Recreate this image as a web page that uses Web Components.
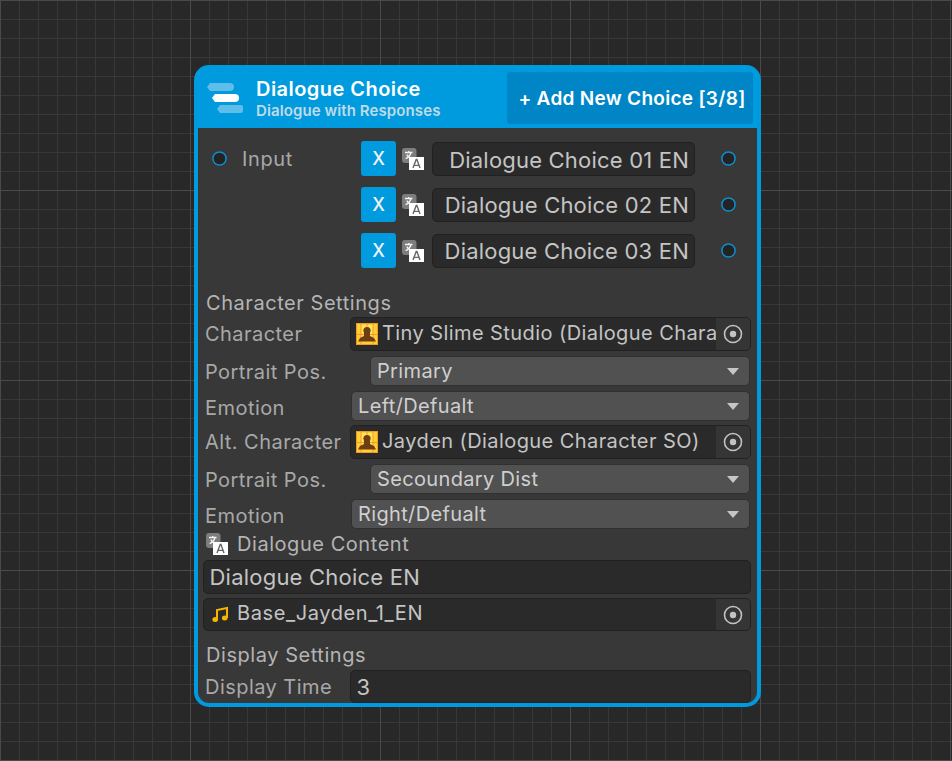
<!DOCTYPE html>
<html lang="en">
<head>
<meta charset="utf-8">
<title>Dialogue Choice</title>
<style>
  html, body { margin: 0; height: 100%; background: #282828; overflow: hidden; }
  body { font-family: Inter, "Noto Sans", sans-serif; color: #c4c4c4; }
</style>
</head>
<body>
<graph-canvas>
  <dialogue-node title="Dialogue Choice" subtitle="Dialogue with Responses" action="+ Add New Choice [3/8]">
    <div style="display:flex;height:138px">
      <input-port label="Input"></input-port>
      <div style="display:flex;flex-direction:column;gap:11px;margin-left:auto">
        <choice-row text="Dialogue Choice 01 EN"></choice-row>
        <choice-row text="Dialogue Choice 02 EN"></choice-row>
        <choice-row text="Dialogue Choice 03 EN"></choice-row>
      </div>
    </div>
    <section-title style="margin-top:12px">Character Settings</section-title>
    <prop-row label="Character" height="34" top="2" left="147"><object-field type="character" text="Tiny Slime Studio (Dialogue Chara"></object-field></prop-row>
    <prop-row label="Portrait Pos." height="30" top="5" left="167" drop="2"><enum-field text="Primary"></enum-field></prop-row>
    <prop-row label="Emotion" height="30" top="5" left="148" drop="4"><enum-field text="Left/Defualt"></enum-field></prop-row>
    <prop-row label="Alt. Character" height="34" top="4" left="147"><object-field type="character" text="Jayden (Dialogue Character SO)"></object-field></prop-row>
    <prop-row label="Portrait Pos." height="30" top="5" left="167" drop="2"><enum-field text="Secoundary Dist"></enum-field></prop-row>
    <prop-row label="Emotion" height="30" top="5" left="148" drop="4"><enum-field text="Right/Defualt"></enum-field></prop-row>
    <section-title translate="yes" style="margin-top:3px">Dialogue Content</section-title>
    <text-field style="margin-top:4px;height:34px" text="Dialogue Choice EN"></text-field>
    <object-field type="audio" text="Base_Jayden_1_EN" style="margin-top:4px;height:33px"></object-field>
    <section-title style="margin-top:12px">Display Settings</section-title>
    <prop-row label="Display Time" height="33" top="3" left="147"><text-field text="3"></text-field></prop-row>
  </dialogue-node>
</graph-canvas>

<script>
// small helper so each component only declares its markup once
function shadow(el, html) {
  if (!el.shadowRoot) el.attachShadow({ mode: "open" });
  el.shadowRoot.innerHTML = html;
}

class GraphCanvas extends HTMLElement {
  connectedCallback() {
    shadow(this, `
      <style>
        :host {
          display: block;
          position: relative;
          width: 952px;
          height: 761px;
          background-color: #282828;
          background-image:
            linear-gradient(#4a4a4a 0 1px, transparent 1px),
            linear-gradient(90deg, #4a4a4a 0 1px, transparent 1px),
            linear-gradient(#383838 0 1px, transparent 1px),
            linear-gradient(90deg, #383838 0 1px, transparent 1px);
          background-size: 190px 190px, 190px 190px, 19px 19px, 19px 19px;
        }
      </style>
      <slot></slot>`);
  }
}

class DialogueNode extends HTMLElement {
  connectedCallback() {
    shadow(this, `
      <style>
        :host {
          display: block;
          position: absolute;
          left: 194px;
          top: 65px;
          width: 567px;
          height: 642px;
          box-sizing: border-box;
          border-radius: 15px;
          background: #009ade;
          overflow: hidden;
        }
        header { display: flex; align-items: center; height: 63px; box-sizing: border-box; padding: 7px 8px 4px 13px; }
        svg { width: 36px; height: 36px; flex: none; }
        .titles { margin-left: 13px; flex: 1; white-space: nowrap; }
        .title { font-size: 20px; font-weight: 600; line-height: 24px; color: #fff; margin-top: -1px; letter-spacing: .45px; }
        .subtitle { font-size: 15px; font-weight: 600; line-height: 17px; color: #c0dbe8; margin-top: 1px; letter-spacing: .1px; }
        .action {
          display: flex; align-items: center; justify-content: center;
          width: 246px; height: 52px; box-sizing: border-box; padding-left: 4px;
          background: #0086c6; border-radius: 3px;
          font-size: 19px; font-weight: 600; color: #fff; white-space: nowrap; letter-spacing: .3px;
        }
        main {
          height: 575px; margin: 0 4px; box-sizing: border-box; padding: 13px 6px 0 5px;
          background: #383838; border-radius: 0 0 11px 11px;
        }
      </style>
      <header>
        <svg viewBox="0 0 36 36">
          <path d="M0 7l3-4h20a4 4 0 0 1 0 8H3z" fill="#5fbde9"/>
          <path d="M5 18l3-4h20a4 4 0 0 1 0 8H8z" fill="#fff"/>
          <path d="M10 29l3-4h20a4 4 0 0 1 0 8H13z" fill="#5fbde9"/>
        </svg>
        <div class="titles">
          <div class="title">${this.getAttribute("title")}</div>
          <div class="subtitle">${this.getAttribute("subtitle")}</div>
        </div>
        <div class="action">${this.getAttribute("action")}</div>
      </header>
      <main><slot></slot></main>`);
  }
}

const TRANSLATE_ICON = `
  <svg viewBox="0 0 22 22" width="22" height="22" style="flex:none;display:block">
    <rect x="0" y="0" width="14.5" height="15" rx="3" fill="#7d7d7d"/>
    <path d="M3 4.5h7.5M6.7 3v1.5M9 4.5c-.7 2.8-2.7 5-5.4 6.2M4.8 6.6c.9 1.8 2.4 3.1 4 3.8" fill="none" stroke="#f4f4f4" stroke-width="1.3"/>
    <path d="M9 9h13v13H7V9z" fill="#fff"/>
    <path d="M11 20 14.2 11.5h.7L18 20M12.2 17.4h4.8" fill="none" stroke="#666" stroke-width="1.4"/>
  </svg>`;

class PortDot extends HTMLElement {
  connectedCallback() {
    shadow(this, `
      <style>
        :host { display: block; width: 15px; height: 15px; flex: none; }
        svg { display: block; }
      </style>
      <svg viewBox="0 0 15 15" width="15" height="15">
        <circle cx="7.5" cy="7.5" r="6.6" fill="#232323" stroke="#0a8fd0" stroke-width="1.5"/>
      </svg>`);
  }
}

class InputPort extends HTMLElement {
  connectedCallback() {
    shadow(this, `
      <style>
        :host { display: flex; align-items: center; height: 35px; padding-left: 9px; gap: 15px;
          font-size: 20px; color: #a8a8a8; letter-spacing: .6px; }
      </style>
      <port-dot></port-dot><span>${this.getAttribute("label")}</span>`);
  }
}

class ChoiceRow extends HTMLElement {
  connectedCallback() {
    shadow(this, `
      <style>
        :host { display: flex; align-items: center; height: 35px; margin-right: 15px; }
        :host(:first-child) .field { padding-top: 2px; }
        .remove {
          display: flex; align-items: center; justify-content: center;
          width: 35px; height: 35px; border-radius: 3px;
          background: #009ade; color: #f2f2f2; font-size: 18px; font-weight: 500;
        }
        .icon { margin-left: 6px; margin-right: 8px; }
        .field {
          width: 263px; height: 34px; box-sizing: border-box; padding-right: 5px;
          display: flex; align-items: center; justify-content: flex-end;
          background: #2a2a2a; border: 1px solid #212121; border-radius: 5px;
          font-size: 22px; color: #c4c4c4; white-space: nowrap; letter-spacing: .2px;
        }
        port-dot { margin-left: 26px; }
      </style>
      <div class="remove">X</div>
      <div class="icon">${TRANSLATE_ICON}</div>
      <div class="field">${this.getAttribute("text")}</div>
      <port-dot></port-dot>`);
  }
}

class SectionTitle extends HTMLElement {
  connectedCallback() {
    const withIcon = this.getAttribute("translate") === "yes";
    shadow(this, `
      <style>
        :host { display: flex; align-items: center; height: 24px; padding-left: 3px; gap: 9px;
          font-size: 20px; color: #b4b4b4; white-space: nowrap; letter-spacing: .55px; }
      </style>
      ${withIcon ? TRANSLATE_ICON : ""}<span><slot></slot></span>`);
  }
}

class PropRow extends HTMLElement {
  connectedCallback() {
    const left = this.getAttribute("left");
    const drop = this.getAttribute("drop") || 0;
    shadow(this, `
      <style>
        :host { display: flex; align-items: center; margin-top: ${this.getAttribute("top")}px;
          height: ${this.getAttribute("height")}px; padding-left: 2px;
          font-size: 20px; color: #a8a8a8; white-space: nowrap; letter-spacing: .45px; }
        .label { flex: none; width: ${left - 2}px; margin-top: ${drop}px; }
        ::slotted(*) { flex: 1; min-width: 0; height: 100%; }
      </style>
      <div class="label">${this.getAttribute("label")}</div><slot></slot>`);
  }
}

class EnumField extends HTMLElement {
  connectedCallback() {
    shadow(this, `
      <style>
        :host { display: flex; align-items: center; justify-content: space-between; box-sizing: border-box;
          padding: 0 10px 0 6px; margin-right: 1px; background: #515151; border: 1px solid #303030; border-radius: 5px;
          font-size: 20px; color: #cfcfcf; letter-spacing: .35px; }
        i { width: 0; height: 0; border: 6.5px solid transparent; border-top: 7px solid #c6c6c6; border-bottom: 0; }
      </style>
      <span>${this.getAttribute("text")}</span><i></i>`);
  }
}

class TextField extends HTMLElement {
  connectedCallback() {
    shadow(this, `
      <style>
        :host { display: flex; align-items: center; box-sizing: border-box; padding-left: 5.5px;
          background: #2a2a2a; border: 1px solid #212121; border-radius: 5px;
          font-size: 22px; color: #c4c4c4; white-space: nowrap; letter-spacing: .22px; }
      </style>
      ${this.getAttribute("text")}`);
  }
}

class ObjectField extends HTMLElement {
  connectedCallback() {
    const audio = this.getAttribute("type") === "audio";
    const icon = audio
      ? `<svg viewBox="0 0 16 16" width="16" height="17" style="margin:0 9px 0 8px;flex:none">
           <path d="M5 13V3.5L15 1.5v10" fill="none" stroke="#f8b500" stroke-width="2"/>
           <ellipse cx="3.2" cy="13" rx="2.8" ry="2.5" fill="#f8b500"/>
           <ellipse cx="12.7" cy="11.5" rx="2.8" ry="2.5" fill="#f8b500"/>
         </svg>`
      : `<svg viewBox="0 0 22 22" width="22" height="22" style="margin:0 4px 0 5px;flex:none">
           <rect width="22" height="22" fill="#ffce33"/>
           <rect x="5" y="2" width="12" height="16" fill="#ffe35c"/>
           <path d="M0 .5h22M.5 0v22M21.5 0v22M0 21.5h22M0 11.5h22M5 0v22M17 0v22M11 0v4" stroke="#f09a28" stroke-width="1"/>
           <circle cx="11" cy="7.5" r="3.6" fill="#6e3d12"/>
           <path d="M8 10h6v3l4 2 2 3.5H2L4 15l4-2z" fill="#6e3d12"/>
         </svg>`;
    shadow(this, `
      <style>
        :host { display: flex; align-items: center; box-sizing: border-box; overflow: hidden;
          background: #2a2a2a; border: 1px solid #212121; border-radius: 5px;
          font-size: 20px; color: #c4c4c4; white-space: nowrap; letter-spacing: ${audio ? ".6px" : ".42px"}; }
        .text { flex: 1; min-width: 0; margin-bottom: ${audio ? 4 : 2}px; }
        .pick { flex: none; width: 34px; align-self: stretch; display: flex; align-items: center; justify-content: center; background: #353535; }
      </style>
      ${icon}<span class="text">${this.getAttribute("text")}</span>
      <div class="pick">
        <svg viewBox="0 0 20 20" width="20" height="20">
          <circle cx="10" cy="10" r="8.5" fill="none" stroke="#c2c2c2" stroke-width="1.6"/>
          <circle cx="10" cy="10" r="3.2" fill="#c2c2c2"/>
        </svg>
      </div>`);
  }
}

customElements.define("graph-canvas", GraphCanvas);
customElements.define("dialogue-node", DialogueNode);
customElements.define("port-dot", PortDot);
customElements.define("input-port", InputPort);
customElements.define("choice-row", ChoiceRow);
customElements.define("section-title", SectionTitle);
customElements.define("prop-row", PropRow);
customElements.define("enum-field", EnumField);
customElements.define("text-field", TextField);
customElements.define("object-field", ObjectField);
</script>
</body>
</html>
